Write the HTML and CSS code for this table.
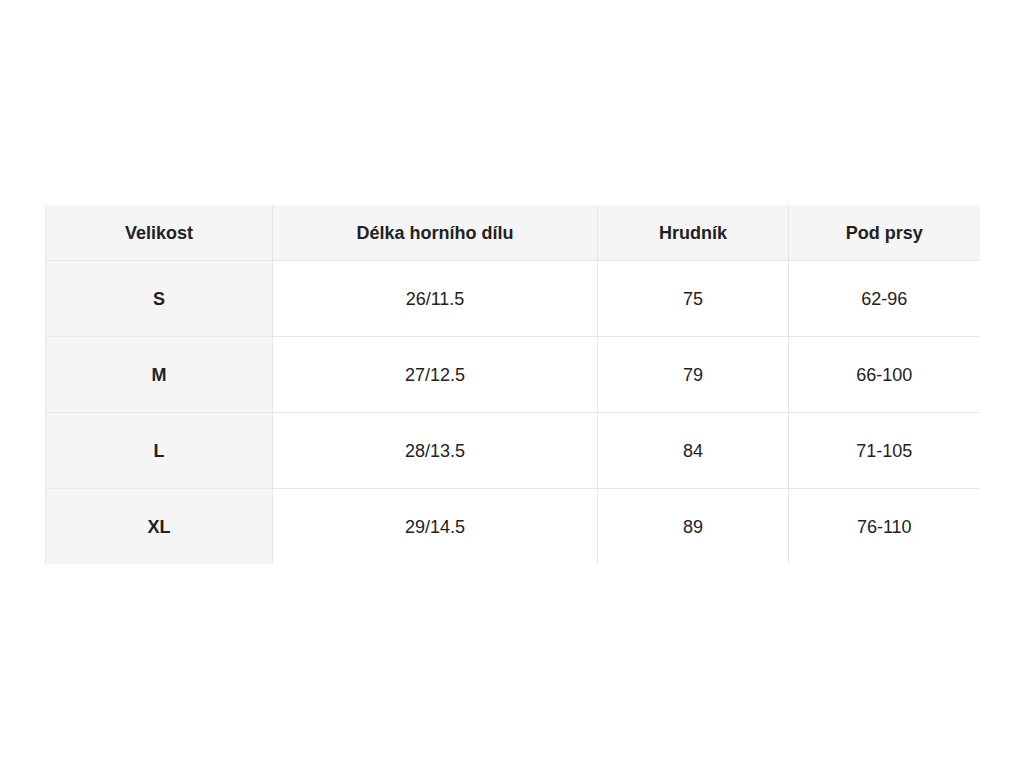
FILE: index.html
```
<!DOCTYPE html>
<html lang="cs">
<head>
<meta charset="utf-8">
<title>Tabulka velikostí</title>
<link rel="stylesheet" href="styles.css">
</head>
<body>
<table class="sizes">
  <colgroup>
    <col class="c1"><col class="c2"><col class="c3"><col class="c4">
  </colgroup>
  <thead>
    <tr class="head">
      <th>Velikost</th>
      <th>Délka horního dílu</th>
      <th>Hrudník</th>
      <th>Pod prsy</th>
    </tr>
  </thead>
  <tbody>
    <tr><th>S</th><td>26/11.5</td><td>75</td><td>62-96</td></tr>
    <tr><th>M</th><td>27/12.5</td><td>79</td><td>66-100</td></tr>
    <tr><th>L</th><td>28/13.5</td><td>84</td><td>71-105</td></tr>
    <tr><th>XL</th><td>29/14.5</td><td>89</td><td>76-110</td></tr>
  </tbody>
</table>
</body>
</html>
```
FILE: styles.css
```
html, body {
  margin: 0;
  padding: 0;
  background: #fff;
}
body {
  font-family: "Liberation Sans", Arial, sans-serif;
  color: #222;
  font-size: 18px;
}
.sizes {
  margin: 205px 0 0 45px;
  width: 934px;
  border-collapse: collapse;
  table-layout: fixed;
  font-size: 18px;
}
.c1 { width: 227px; }
.c2 { width: 325px; }
.c3 { width: 191px; }
.c4 { width: 191px; }
.sizes th, .sizes td {
  text-align: center;
  vertical-align: middle;
  padding: 0;
  line-height: 20px;
  border-left: 1px solid #e6e6e6;
  border-bottom: 1px solid #e6e6e6;
}
.sizes tbody tr:last-child th,
.sizes tbody tr:last-child td {
  border-bottom: none;
}
.head th {
  background: #f5f5f5;
  font-weight: bold;
  height: 55px;
}
.sizes tbody th {
  background: #f5f5f5;
  font-weight: bold;
}
.sizes tbody td, .sizes tbody th {
  height: 75px;
}
```
